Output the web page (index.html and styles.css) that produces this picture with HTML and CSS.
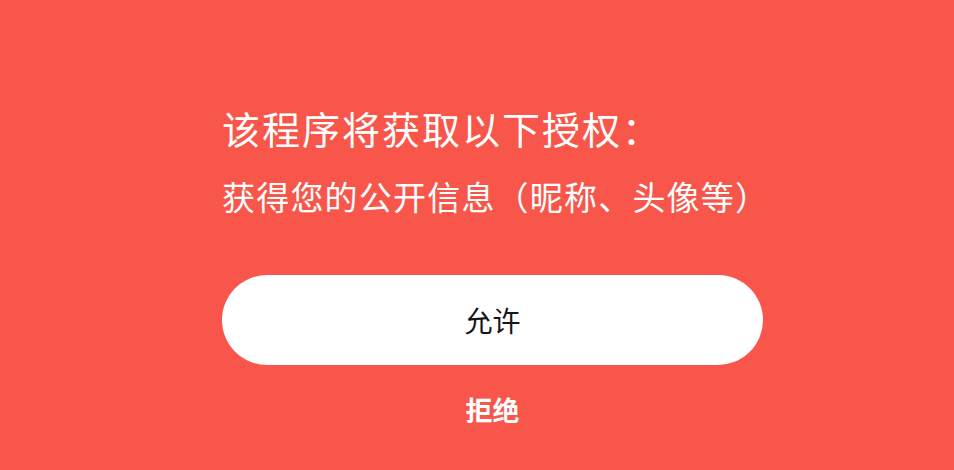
FILE: index.html
```html
<!DOCTYPE html>
<html>

	<head>
		<meta charset="UTF-8">
		<title>授权</title>
		<link rel="stylesheet" href="styles.css">
	</head>

	<body>
		<div id="auth">
			<h1 class="auth-title">该程序将获取以下授权：</h1>
			<p class="auth-desc">获得您的公开信息（昵称、头像等）</p>
			<button class="btn-allow">允许</button>
			<a class="btn-deny" href="#">拒绝</a>
		</div>
	</body>

</html>
```

FILE: styles.css
```css
html,
body {
	margin: 0;
	height: 100%;
}

body {
	background: #f8564a;
	font-family: "Noto Sans CJK SC", "Noto Sans", sans-serif;
	color: #fff;
	overflow: hidden;
}

#auth {
	width: 541px;
	margin-left: 222px;
	padding-top: 103px;
	display: flex;
	flex-direction: column;
}

.auth-title {
	margin: 0;
	font-size: 38px;
	font-weight: normal;
	line-height: 50px;
	letter-spacing: 2px;
}

.auth-desc {
	margin: 21px 0 0;
	font-size: 33px;
	line-height: 44px;
	letter-spacing: 1.2px;
}

.btn-allow {
	margin-top: 57px;
	height: 90px;
	border: 0 none;
	border-radius: 45px;
	background: #fff;
	color: #151515;
	font-family: inherit;
	font-size: 28px;
}

.btn-deny {
	align-self: center;
	margin-top: 25px;
	font-size: 27px;
	font-weight: bold;
	line-height: 40px;
	color: #fff;
	text-decoration: none;
}
```
